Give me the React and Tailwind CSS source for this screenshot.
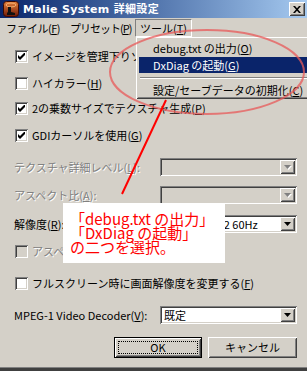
import React from 'react';

const sunken =
  'shadow-[inset_1px_1px_0_#808080,inset_-1px_-1px_0_#ffffff,inset_2px_2px_0_#404040,inset_-2px_-2px_0_#d4d0c8]';
const raised =
  'shadow-[inset_1px_1px_0_#ffffff,inset_-1px_-1px_0_#404040,inset_2px_2px_0_#d4d0c8,inset_-2px_-2px_0_#808080]';
const etched = 'text-[#808080] [text-shadow:1px_1px_0_#ffffff]';

const Key = ({ k }) => (
  <>
    (<span className="underline underline-offset-1">{k}</span>)
  </>
);

const Check = ({ checked, disabled }) => (
  <span
    className={`w-[13px] h-[13px] shrink-0 flex items-center justify-center ${sunken} ${
      disabled ? 'bg-[#d4d0c8]' : 'bg-white'
    }`}
  >
    {checked && (
      <svg width="7" height="7" viewBox="0 0 7 7">
        <path d="M0 2L2 4L7 -1V2L2 7L0 5Z" fill="#000" />
      </svg>
    )}
  </span>
);

const CheckRow = ({ checked, disabled, children, className }) => (
  <div className={`h-[18px] flex items-center pl-[15px] ${className}`}>
    <Check checked={checked} disabled={disabled} />
    <span className={`ml-[4px] whitespace-nowrap ${disabled ? etched : ''}`}>{children}</span>
  </div>
);

const Combo = ({ value, disabled }) => (
  <div
    className={`w-[137px] h-[18px] p-[2px] flex ${sunken} ${disabled ? 'bg-[#d4d0c8]' : 'bg-white'}`}
  >
    <span className="flex-1 pl-[2px] leading-[14px] whitespace-nowrap overflow-hidden">{value}</span>
    <span className={`w-[15px] h-[14px] flex items-center justify-center bg-[#d4d0c8] ${raised}`}>
      <svg width="7" height="5" viewBox="0 0 7 5" className="overflow-visible">
        {disabled && <path d="M1 1H8L4.5 5Z" fill="#ffffff" />}
        <path d="M0 0H7L3.5 4Z" fill={disabled ? '#808080' : '#000'} />
      </svg>
    </span>
  </div>
);

const ComboRow = ({ label, value, disabled, className }) => (
  <div className={`flex items-center justify-between pl-[14px] pr-[10px] ${className}`}>
    <span className={`whitespace-nowrap ${disabled ? etched : ''}`}>{label}</span>
    <Combo value={value} disabled={disabled} />
  </div>
);

const AppIcon = () => (
  <svg width="16" height="16" viewBox="0 0 16 16">
    <defs>
      <linearGradient id="ic" x1="0" y1="0" x2="0" y2="1">
        <stop offset="0" stopColor="#e8823e" />
        <stop offset="1" stopColor="#6e1806" />
      </linearGradient>
    </defs>
    <rect x="0.5" y="0.5" width="15" height="15" rx="3" fill="url(#ic)" stroke="#3a0a02" />
    <ellipse cx="8" cy="4" rx="5" ry="2" fill="none" stroke="#f2b070" />
    <path d="M5 6h3v5l4 1v2H4v-2l1-1z" fill="#111" />
  </svg>
);

export default function App() {
  return (
    <div className="w-[307px] h-[371px] relative overflow-hidden bg-[#d4d0c8] text-[11px] text-black font-['Noto_Sans_CJK_JP',sans-serif] leading-none">
      {/* title bar */}
      <div className="h-[18px] flex items-center bg-linear-to-r from-[#0a246a] to-[#a6caf0] pl-[3px] pr-[2px]">
        <AppIcon />
        <span className="ml-[4px] text-white font-bold text-[11px] font-['DejaVu_Sans','Noto_Sans_CJK_JP',sans-serif] tracking-[0.3px]">
          Malie System 詳細設定
        </span>
        <span className={`ml-auto w-[16px] h-[14px] flex items-center justify-center bg-[#d4d0c8] ${raised}`}>
          <svg width="8" height="7" viewBox="0 0 8 7">
            <path d="M0 0h2l2 2.2L6 0h2L5 3.5 8 7H6L4 4.8 2 7H0l3-3.5z" fill="#000" />
          </svg>
        </span>
      </div>

      {/* menu bar */}
      <div className="h-[20px] flex items-center">
        <span className="w-[64px] pl-[6px] whitespace-nowrap tracking-[-0.5px]">
          ファイル<Key k="F" />
        </span>
        <span className="w-[71px] pl-[6px] whitespace-nowrap tracking-[-1px]">
          プリセット<Key k="P" />
        </span>
        <span className="w-[57px] h-[18px] flex items-center justify-center whitespace-nowrap border-t border-l border-[#808080] border-r-white border-b-white border-r border-b">
          ツール<Key k="T" />
        </span>
      </div>

      {/* body */}
      <div className="flex flex-col">
        <CheckRow checked className="mt-[9px]">
          イメージを管理下りソースで読み込む<Key k="I" />
        </CheckRow>
        <CheckRow className="mt-[9px]">
          ハイカラー<Key k="H" />
        </CheckRow>
        <CheckRow checked className="mt-[7px]">
          2の乗数サイズでテクスチャ生成<Key k="P" />
        </CheckRow>
        <CheckRow checked className="mt-[9px]">
          GDIカーソルを使用<Key k="G" />
        </CheckRow>

        <ComboRow
          className="mt-[14px]"
          disabled
          label={
            <>
              テクスチャ詳細レベル<Key k="L" />:
            </>
          }
          value=""
        />
        <ComboRow
          className="mt-[10px]"
          disabled
          label={
            <>
              アスペクト比<Key k="A" />:
            </>
          }
          value=""
        />
        <ComboRow
          className="mt-[11px]"
          label={
            <>
              解像度<Key k="R" />:
            </>
          }
          value="1024x768x32 60Hz"
        />

        <CheckRow disabled className="mt-[9px]">
          アスペクト比を固定<Key k="K" />
        </CheckRow>
        <CheckRow className="mt-[14px]">
          フルスクリーン時に画面解像度を変更する<Key k="F" />
        </CheckRow>

        <ComboRow
          className="mt-[14px]"
          label={
            <>
              MPEG-1 Video Decoder<Key k="V" />:
            </>
          }
          value="既定"
        />

        <div className="mt-[13px] flex justify-end gap-[6px] pr-[10px]">
          <button className="w-[88px] h-[21px] border border-black bg-[#d4d0c8] p-0">
            <span className={`w-full h-full flex p-[3px] ${raised}`}>
              <span className="flex-1 flex items-center justify-center border border-dotted border-black">
                OK
              </span>
            </span>
          </button>
          <button className={`w-[89px] h-[21px] bg-[#d4d0c8] flex items-center justify-center ${raised}`}>
            キャンセル
          </button>
        </div>
      </div>

      {/* window bottom frame */}
      <div className="absolute left-0 right-0 bottom-0 h-[4px] bg-[#404040] border-t border-[#808080]" />

      {/* dropped-down tools menu */}
      <div
        className={`absolute left-[136px] top-[37px] w-[180px] h-[62px] bg-[#d4d0c8] p-[3px] ${raised}`}
      >
        <div className="h-[17px] flex items-center pl-[14px] whitespace-nowrap">
          debug.txt の出力<Key k="O" />
        </div>
        <div className="h-[16px] flex items-center pl-[14px] whitespace-nowrap bg-[#0a246a] text-white">
          DxDiag の起動<Key k="G" />
        </div>
        <div className="h-[9px] flex items-center px-[1px]">
          <div className="w-full h-[2px] border-t border-[#808080] border-b border-b-white" />
        </div>
        <div className="h-[16px] flex items-center pl-[14px] whitespace-nowrap">
          設定/セーブデータの初期化<Key k="C" />
        </div>
      </div>

      {/* annotation: ellipse and pointer line */}
      <svg className="absolute inset-0 pointer-events-none" width="307" height="371">
        <ellipse cx="207" cy="72" rx="97" ry="42" fill="none" stroke="#e85a5a" strokeOpacity="0.75" strokeWidth="2" />
        <line x1="166" y1="100" x2="122" y2="194" stroke="#ff0000" strokeWidth="2" />
      </svg>

      {/* annotation: callout */}
      <div className="absolute left-[63px] top-[203px] w-[162px] h-[60px] bg-white pt-[9px] pl-[7px] text-[15px] leading-[14px] text-[#ff0000] whitespace-nowrap">
        <div>「debug.txt の出力」</div>
        <div>「DxDiag の起動」</div>
        <div>の二つを選択。</div>
      </div>
    </div>
  );
}
